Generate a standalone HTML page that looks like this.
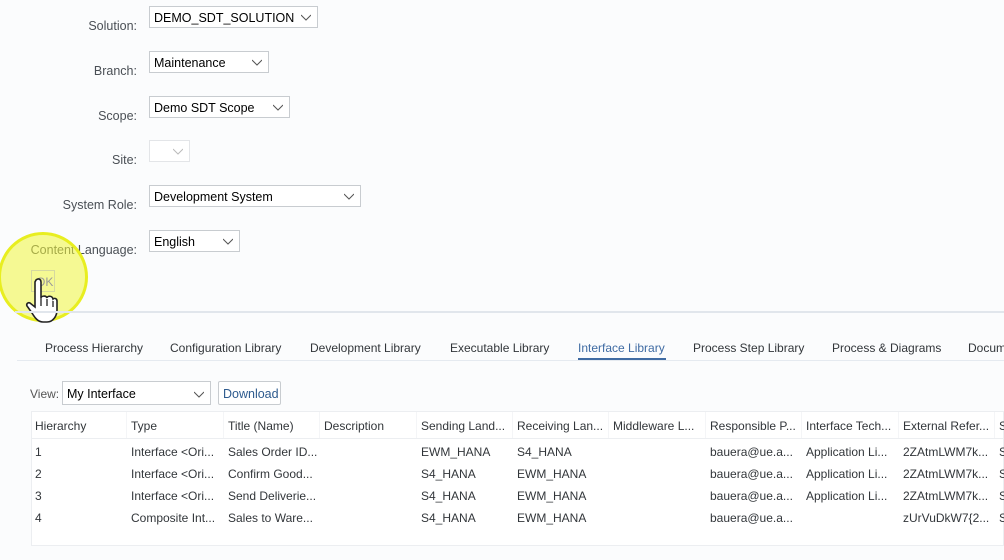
<!DOCTYPE html>
<html><head><style>
body{margin:0;width:1004px;height:560px;background:#fbfcfd;font-family:"Liberation Sans",sans-serif;position:relative;overflow:hidden;color:#32363a}
.lbl{position:absolute;right:867px;font-size:12.5px;color:#4a4f55;text-align:right;white-space:nowrap}
.dd{position:absolute;left:149px;height:22px;border:1px solid #c8ccd0;background:#fff;box-sizing:border-box;font-size:12.5px;color:#000;padding:4px 0 0 4px}
.dd svg{position:absolute;right:6px;top:7px}
.tab{position:absolute;top:341px;font-size:12px;color:#32363a;white-space:nowrap}
.c{position:absolute;font-size:12px;white-space:nowrap;color:#32363a}
</style></head><body>
<div class="lbl" style="top:19px">Solution:</div>
<div class="lbl" style="top:64px">Branch:</div>
<div class="lbl" style="top:109px">Scope:</div>
<div class="lbl" style="top:153px">Site:</div>
<div class="lbl" style="top:198px">System Role:</div>
<div class="lbl" style="top:243px">Content Language:</div>
<div class="dd" style="top:6px;width:169px">DEMO_SDT_SOLUTION<svg width="10" height="7"><path d="M0 1L5 6L10 1" fill="none" stroke="#555" stroke-width="1"/></svg></div>
<div class="dd" style="top:51px;width:120px">Maintenance<svg width="10" height="7"><path d="M0 1L5 6L10 1" fill="none" stroke="#555" stroke-width="1"/></svg></div>
<div class="dd" style="top:96px;width:141px">Demo SDT Scope<svg width="10" height="7"><path d="M0 1L5 6L10 1" fill="none" stroke="#555" stroke-width="1"/></svg></div>
<div class="dd" style="top:140px;width:41px;border-color:#e3e5e8"><svg width="10" height="7"><path d="M0 1L5 6L10 1" fill="none" stroke="#bbb" stroke-width="1"/></svg></div>
<div class="dd" style="top:185px;width:212px">Development System<svg width="10" height="7"><path d="M0 1L5 6L10 1" fill="none" stroke="#555" stroke-width="1"/></svg></div>
<div class="dd" style="top:230px;width:91px">English<svg width="10" height="7"><path d="M0 1L5 6L10 1" fill="none" stroke="#555" stroke-width="1"/></svg></div>
<div style="position:absolute;left:-2px;top:232px;width:90px;height:90px;border-radius:50%;background:rgba(240,245,60,0.55);border:3px solid #e8ee20;box-sizing:border-box"></div>
<div style="position:absolute;left:31px;top:270px;width:24px;height:22px;border:1px solid #d5d8a0;font-size:12px;color:#999;padding:4px 0 0 4px;box-sizing:border-box">OK</div>
<svg style="position:absolute;left:24px;top:276px" width="36" height="50"><path d="M12 4c2-2 5-1 5 2v16c0-2 5-3 6 0c0-2 5-3 6 1c1-1 4-1 4 2v9c0 6-4 12-10 12h-4c-5 0-8-4-11-9l-5-7c-1-2 1-4 3-3l5 4V6z" fill="#fff" stroke="#222" stroke-width="1.6"/><path d="M17 22v8M23 23v7M29 25v6" stroke="#222" stroke-width="1.3"/></svg>
<div style="position:absolute;left:15px;top:311px;right:0;height:2px;background:#e1e6ec"></div>
<div class="tab" style="left:45px">Process Hierarchy</div>
<div class="tab" style="left:170px">Configuration Library</div>
<div class="tab" style="left:310px">Development Library</div>
<div class="tab" style="left:450px">Executable Library</div>
<div class="tab" style="left:578px;color:#3f6ba3">Interface Library</div>
<div style="position:absolute;left:578px;top:358px;width:88px;height:2px;background:#3f6ba3"></div>
<div class="tab" style="left:693px">Process Step Library</div>
<div class="tab" style="left:832px">Process &amp; Diagrams</div>
<div class="tab" style="left:968px">Documents</div>
<div style="position:absolute;left:17px;top:360px;right:0;height:1px;background:#e5eaf0"></div>
<div class="c" style="left:30px;top:387px;color:#555">View:</div>
<div class="dd" style="left:62px;top:381px;width:149px;height:24px;padding-top:5px">My Interface<svg width="10" height="7" style="top:9px"><path d="M0 1L5 6L10 1" fill="none" stroke="#555" stroke-width="1"/></svg></div>
<div style="position:absolute;left:218px;top:381px;width:63px;height:24px;border:1px solid #c8ccd0;border-radius:2px;background:#fff;box-sizing:border-box;font-size:12.5px;color:#2d5a8e;padding:5px 0 0 4px">Download</div>
<div style="position:absolute;left:31px;top:411px;right:0;height:133px;background:#fff;border:1px solid #eceef1"></div>
<div style="position:absolute;left:31px;top:438px;right:0;height:1px;background:#eceef1"></div>
<div id="t"></div>
<script>
var xs=[35,131,228,324,421,517,613,710,806,903,999];
var rows=[["Hierarchy","Type","Title (Name)","Description","Sending Land...","Receiving Lan...","Middleware L...","Responsible P...","Interface Tech...","External Refer...","S"],
["1","Interface &lt;Ori...","Sales Order ID...","","EWM_HANA","S4_HANA","","bauera@ue.a...","Application Li...","2ZAtmLWM7k...","S"],
["2","Interface &lt;Ori...","Confirm Good...","","S4_HANA","EWM_HANA","","bauera@ue.a...","Application Li...","2ZAtmLWM7k...","S"],
["3","Interface &lt;Ori...","Send Deliverie...","","S4_HANA","EWM_HANA","","bauera@ue.a...","Application Li...","2ZAtmLWM7k...","S"],
["4","Composite Int...","Sales to Ware...","","S4_HANA","EWM_HANA","","bauera@ue.a...","","zUrVuDkW7{2...","S"]];
var ys=[419,445,467,489,511],h="";
rows.forEach(function(r,i){r.forEach(function(t,j){h+='<div class="c" style="left:'+xs[j]+'px;top:'+ys[i]+'px">'+t+'</div>';});});
for(var j=1;j<xs.length;j++)h+='<div style="position:absolute;left:'+(xs[j]-5)+'px;top:412px;width:1px;height:26px;background:#f4f5f7"></div>';
document.getElementById('t').innerHTML=h;
</script>
</body></html>
